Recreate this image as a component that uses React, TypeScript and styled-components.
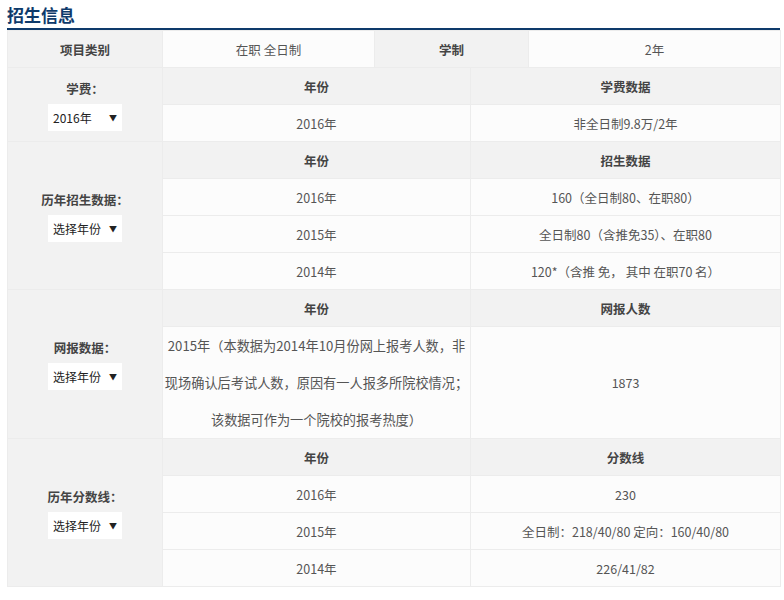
import styled, { createGlobalStyle } from "styled-components";

const Global = createGlobalStyle`
  body { margin: 0; background: #fff; font-family: "Microsoft YaHei", "Noto Sans CJK SC", sans-serif; }
`;
const Wrap = styled.div`
  padding: 4px 4px 0 7px;
`;
const Title = styled.h2`
  margin: 0;
  font-size: 17px;
  font-weight: 700;
  color: #0e3a6b;
  line-height: 22px;
  padding-bottom: 2px;
  border-bottom: 2px solid #0e3a6b;
`;
const Table = styled.table`
  width: 773px;
  border-collapse: collapse;
  table-layout: fixed;
  font-size: 12.5px;
  color: #555;
  td { border: 1px solid #ececec; text-align: center; height: 36px; padding: 0; }
`;
const Head = styled.td`
  background: #f2f2f2;
  font-weight: 700;
  color: #444;
`;
const Side = styled.td`
  background: #f2f2f2;
  font-weight: 700;
  color: #444;
`;
const Cell = styled.td<{ $tall?: boolean }>`
  background: #fcfcfc;
  line-height: ${(p) => (p.$tall ? "37px" : "normal")};
  font-size: ${(p) => (p.$tall ? "13.2px" : "inherit")};
`;
const Label = styled.div`
  margin-bottom: 6px;
`;
const Select = styled.div`
  display: inline-flex;
  justify-content: space-between;
  align-items: center;
  width: 64px;
  height: 27px;
  padding: 0 5px;
  background: #fff;
  color: #222;
  font-weight: 400;
  font-size: 12px;
  &::after { content: "▼"; font-size: 8px; }
`;

const rowsOf = (rows: string[][]) =>
  rows.map(([a, b]) => (
    <tr key={a + b}>
      <Cell colSpan={2}>{a}</Cell>
      <Cell colSpan={2}>{b}</Cell>
    </tr>
  ));

const SectionHead = ({ label, sel, span, h2 }: { label: string; sel: string; span: number; h2: string }) => (
  <tr>
    <Side rowSpan={span}>
      <Label>{label}</Label>
      <Select>{sel}</Select>
    </Side>
    <Head colSpan={2}>年份</Head>
    <Head colSpan={2}>{h2}</Head>
  </tr>
);

export default function App() {
  return (
    <Wrap>
      <Global />
      <Title>招生信息</Title>
      <Table>
        <colgroup>
          <col style={{ width: 155 }} />
          <col style={{ width: 212 }} />
          <col style={{ width: 96 }} />
          <col style={{ width: 58 }} />
          <col style={{ width: 252 }} />
        </colgroup>
        <tbody>
          <tr>
            <Head>项目类别</Head>
            <Cell>在职 全日制</Cell>
            <Head colSpan={2}>学制</Head>
            <Cell>2年</Cell>
          </tr>
          <SectionHead label="学费：" sel="2016年" span={2} h2="学费数据" />
          {rowsOf([["2016年", "非全日制9.8万/2年"]])}
          <SectionHead label="历年招生数据：" sel="选择年份" span={4} h2="招生数据" />
          {rowsOf([
            ["2016年", "160（全日制80、在职80）"],
            ["2015年", "全日制80（含推免35）、在职80"],
            ["2014年", "120*（含推 免， 其中 在职70 名）"],
          ])}
          <SectionHead label="网报数据：" sel="选择年份" span={2} h2="网报人数" />
          <tr>
            <Cell colSpan={2} $tall>
              2015年（本数据为2014年10月份网上报考人数，非现场确认后考试人数，原因有一人报多所院校情况；该数据可作为一个院校的报考热度）
            </Cell>
            <Cell colSpan={2}>1873</Cell>
          </tr>
          <SectionHead label="历年分数线：" sel="选择年份" span={4} h2="分数线" />
          {rowsOf([
            ["2016年", "230"],
            ["2015年", "全日制：218/40/80 定向：160/40/80"],
            ["2014年", "226/41/82"],
          ])}
        </tbody>
      </Table>
    </Wrap>
  );
}
